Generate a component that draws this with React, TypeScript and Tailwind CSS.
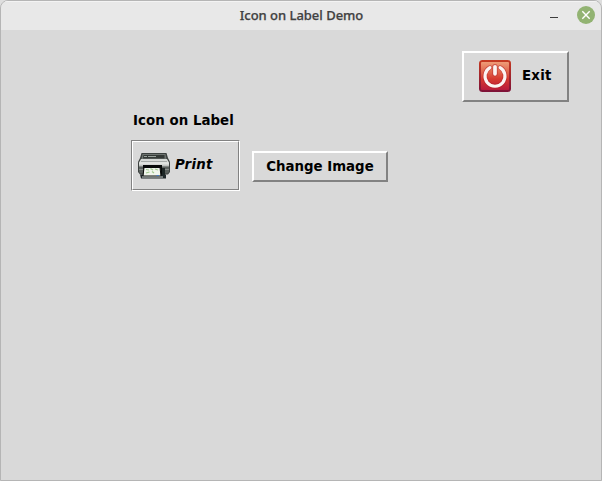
function PowerIcon() {
  return (
    <svg width="32" height="32" viewBox="0 0 32 32" className="block shrink-0">
      <defs>
        <linearGradient id="pwr" x1="0" y1="0" x2="0" y2="1">
          <stop offset="0" stopColor="#ee9c78" />
          <stop offset="0.35" stopColor="#e0664e" />
          <stop offset="0.6" stopColor="#d63a30" />
          <stop offset="1" stopColor="#b81a3c" />
        </linearGradient>
        <linearGradient id="rim" x1="0" y1="0" x2="0" y2="1">
          <stop offset="0" stopColor="#c63a22" />
          <stop offset="1" stopColor="#7d1238" />
        </linearGradient>
      </defs>
      <rect x="0" y="0" width="32" height="32" rx="3.5" fill="url(#rim)" />
      <rect x="2" y="2" width="28" height="28" rx="1" fill="url(#pwr)" />
      <path d="M10.9 7.6 A10 10 0 1 0 21.1 7.6" fill="none" stroke="#b01c24" strokeOpacity="0.5" strokeWidth="4.6" strokeLinecap="round" />
      <path d="M16 6.8 V13.8" stroke="#b01c24" strokeOpacity="0.5" strokeWidth="5.4" strokeLinecap="round" />
      <path d="M10.9 7.6 A10 10 0 1 0 21.1 7.6" fill="none" stroke="#fbf4f3" strokeWidth="3.1" strokeLinecap="round" />
      <path d="M16 6.8 V13.8" stroke="#fbf4f3" strokeWidth="3.7" strokeLinecap="round" />
    </svg>
  );
}

function PrinterIcon() {
  return (
    <svg width="32" height="26" viewBox="0 0 32 26" className="block shrink-0">
      <defs>
        <linearGradient id="body" x1="0" y1="0" x2="0" y2="1">
          <stop offset="0" stopColor="#d3d6d3" />
          <stop offset="0.6" stopColor="#e2e4e1" />
          <stop offset="1" stopColor="#a2a6a3" />
        </linearGradient>
      </defs>
      <path d="M3.5 0H28.5L30 5L32 9V19L30 21.5H2L0 19V9L2 5Z" fill="#3c413f" />
      <path d="M4.5 1H27.5L28.5 6H3.5Z" fill="#6d7370" />
      <path d="M5.5 2H26.5V5.5H5Z" fill="#343936" />
      <path d="M6 3.5H9M10 3.5H18" stroke="#9aa29d" strokeWidth="1" />
      <path d="M3 6H29L31 9.5V14H1V9.5Z" fill="url(#body)" />
      <path d="M3 8.5H29" stroke="#a4a9a6" />
      <path d="M1 13.5H31V19L29.5 20.5H2.5L1 19Z" fill="#5a605d" />
      <path d="M1 16.5H31" stroke="#858b87" />
      <path d="M5 12H24V23H5Z" fill="#080a09" />
      <path d="M24 15H27V24H24Z" fill="#1d2625" />
      <path d="M6.5 14H22L22.5 21.5H6Z" fill="#f3f8ef" />
      <path d="M8 16.5L10.5 17M12 15.5L14.5 16M17 16L20 17M9 20L12 19M14 18.5L16 20M18 20L20.5 19" fill="none" stroke="#8ebf78" strokeOpacity="0.85" strokeWidth="1.2" />
      <path d="M2 21.5H28V25.5H3Z" fill="#20282a" />
      <path d="M6 14.5L5 23H23L22 14.5Z" fill="#f0f5ec" stroke="#080a09" strokeWidth="1" />
      <path d="M8 16.5L11 17M12.5 15.5L15 17M17 16L20 17M8 20L11.5 19M14 18.5L16 20" fill="none" stroke="#8ebf78" strokeOpacity="0.8" strokeWidth="1.2" />
      <path d="M4 24H25" stroke="#c9cecb" strokeWidth="1" />
      <path d="M18.5 22.5H21" stroke="#477bc2" />
    </svg>
  );
}

export default function App() {
  return (
    <div className="flex h-[481px] w-[602px] flex-col overflow-hidden bg-[#dedede]">
      <div className="flex flex-1 flex-col overflow-hidden rounded-t-[8px] border border-[#b5b5b5] bg-[#d9d9d9]">
        <header className="grid h-[29px] shrink-0 grid-cols-[1fr_auto_1fr] items-center border-t border-[#f3f3f3] bg-[#e8e8e8] pb-[2px]">
          <span />
          <h1 className="pl-px font-['Noto_Sans',sans-serif] text-[13px] leading-[18px] font-medium tracking-[-0.02px] text-[#414141] [-webkit-text-stroke:0.25px_#414141]">
            Icon on Label Demo
          </h1>
          <div className="flex items-center justify-end gap-[19px] pr-1.5">
            <svg width="8" height="18" viewBox="0 0 8 18" className="block">
              <path d="M0 11.5H8" stroke="#3c3c3c" />
            </svg>
            <svg width="18" height="18" viewBox="0 0 18 18" className="block">
              <circle cx="9" cy="9" r="9" fill="#92b372" />
              <path d="M5.3 5.3L12.7 12.7M12.7 5.3L5.3 12.7" stroke="#fff" strokeWidth="1.4" />
            </svg>
          </div>
        </header>
        <main className="flex flex-1 flex-col font-['DejaVu_Sans',sans-serif] text-[13.333px] leading-4 font-bold text-black">
          <button className="mt-[21px] mr-8 flex h-[51px] w-[107px] items-center gap-[11px] self-end border-2 border-t-white border-r-[#828282] border-b-[#828282] border-l-white pb-[2px] pl-[15px]">
            <PowerIcon />
            <span className="tracking-[0.25px]">Exit</span>
          </button>
          <p className="mt-[11px] ml-[132px] tracking-[0.06px]">Icon on Label</p>
          <div className="mt-[11px] ml-[130px] flex items-start gap-3">
            <div className="h-[51px] w-[109px] border border-t-[#828282] border-r-white border-b-white border-l-[#828282]">
              <div className="flex h-full items-center gap-[5px] border border-t-white border-r-[#828282] border-b-[#828282] border-l-white pl-[5px]">
                <PrinterIcon />
                <span className="-mt-0.5 tracking-[0.25px] italic">Print</span>
              </div>
            </div>
            <button className="mt-[11px] flex h-[31px] w-[136px] items-center justify-center border-2 border-t-white border-r-[#828282] border-b-[#828282] border-l-white">
              Change Image
            </button>
          </div>
        </main>
      </div>
    </div>
  );
}
